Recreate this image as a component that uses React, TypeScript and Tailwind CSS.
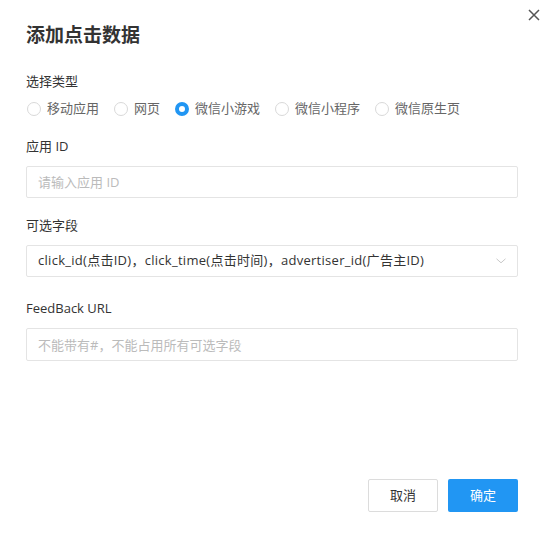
import { useState } from "react"

const types = ["移动应用", "网页", "微信小游戏", "微信小程序", "微信原生页"]

const font = { fontFamily: '"Open Sans", "Noto Sans CJK SC", sans-serif' }

export default function App() {
  const [selected, setSelected] = useState(2)

  return (
    <div
      className="relative flex h-[547px] w-[552px] flex-col bg-white pb-[35px] pl-[26px] pr-[34px] pt-[23px] text-[13px] text-[#333]"
      style={font}
    >
      {/* Close */}
      <button className="absolute right-[12px] top-[9px] flex h-[12px] w-[12px] items-center justify-center text-[#555]">
        <svg width="12" height="12" viewBox="0 0 12 12" fill="none" stroke="currentColor" strokeWidth="1.5">
          <path d="M1 1L11 11M11 1L1 11" />
        </svg>
      </button>

      <h1 className="text-[19px] font-bold leading-[24px] text-[#333]">添加点击数据</h1>

      {/* Type */}
      <div className="mt-[24px] leading-[20px]">选择类型</div>
      <div className="mt-[8px] flex h-[20px] items-center gap-[15px] pl-[1px] text-[#666]">
        {types.map((t, i) => (
          <label key={t} className="flex cursor-pointer items-center gap-[6px]" onClick={() => setSelected(i)}>
            <span
              className={
                i === selected
                  ? "h-[14px] w-[14px] rounded-full border-[4px] border-[#2196f3] bg-white"
                  : "h-[14px] w-[14px] rounded-full border border-[#d9d9d9] bg-white"
              }
            />
            <span>{t}</span>
          </label>
        ))}
      </div>

      {/* App ID */}
      <div className="mt-[17px] leading-[20px]">应用 ID</div>
      <input
        className="mt-[10px] h-[32px] w-full rounded-[2px] border border-[#e4e4e4] px-[11px] text-[13px] outline-none placeholder:text-[#bbb]"
        placeholder="请输入应用 ID"
        style={font}
      />

      {/* Fields */}
      <div className="mt-[17px] leading-[20px]">可选字段</div>
      <div className="mt-[10px] flex h-[32px] w-full items-center justify-between rounded-[2px] border border-[#e4e4e4] pl-[11px] pr-[11px]">
        <span className="tracking-[0.28px] text-[#333]">click_id(点击ID)，click_time(点击时间)，advertiser_id(广告主ID)</span>
        <svg width="10" height="6" viewBox="0 0 10 6" fill="none" stroke="#c8c8c8" strokeWidth="1">
          <path d="M0.5 0.8L5 4.8L9.5 0.8" />
        </svg>
      </div>

      {/* Feedback */}
      <div className="mt-[21px] leading-[20px]">FeedBack URL</div>
      <input
        className="mt-[10px] h-[33px] w-full rounded-[2px] border border-[#e4e4e4] px-[11px] text-[13px] outline-none placeholder:text-[#bbb]"
        placeholder="不能带有#，不能占用所有可选字段"
        style={font}
      />

      <div className="flex-1" />

      <div className="flex justify-end gap-[10px]">
        <button className="h-[33px] w-[70px] rounded-[2px] border border-[#dcdcdc] bg-white text-[13px] text-[#333]">
          取消
        </button>
        <button className="h-[33px] w-[70px] rounded-[2px] bg-[#2196f3] text-[13px] text-white">确定</button>
      </div>
    </div>
  )
}
